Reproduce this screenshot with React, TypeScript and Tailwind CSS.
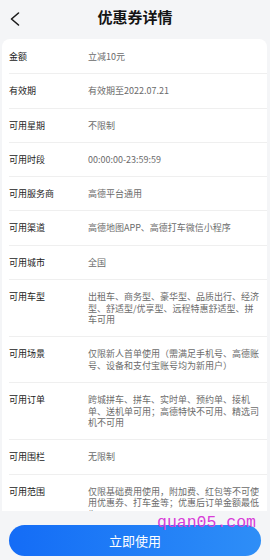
import React from "react";

const rows: [string, string][] = [
  ["金额", "立减10元"],
  ["有效期", "有效期至2022.07.21"],
  ["可用星期", "不限制"],
  ["可用时段", "00:00:00-23:59:59"],
  ["可用服务商", "高德平台通用"],
  ["可用渠道", "高德地图APP、高德打车微信小程序"],
  ["可用城市", "全国"],
  ["可用车型", "出租车、商务型、豪华型、品质出行、经济型、舒适型/优享型、远程特惠舒适型、拼车可用"],
  ["可用场景", "仅限新人首单使用（需满足手机号、高德账号、设备和支付宝账号均为新用户）"],
  ["可用订单", "跨城拼车、拼车、实时单、预约单、接机单、送机单可用；高德特快不可用、精选司机不可用"],
  ["可用围栏", "无限制"],
  ["可用范围", "仅限基础费用使用，附加费、红包等不可使用优惠券、打车金等；优惠后订单金额最低为0.01元"],
];

export default function App() {
  return (
    <div
      className="relative flex h-[560px] w-[270px] flex-col overflow-hidden bg-[#f4f5f7]"
      style={{ fontFamily: '"Noto Sans CJK SC", "Noto Sans", sans-serif' }}
    >
      <div className="relative flex h-[33px] shrink-0 items-center justify-center">
        <svg
          className="absolute left-[9px] top-[11px]"
          width="12"
          height="16"
          viewBox="0 0 12 16"
          fill="none"
        >
          <polyline
            points="9.5,2 2.5,8 9.5,14"
            stroke="#1a1a1a"
            strokeWidth="1.6"
            strokeLinecap="round"
            strokeLinejoin="round"
          />
        </svg>
        <span className="text-[15px] font-bold leading-[20px] text-[#141414]">优惠券详情</span>
      </div>
      <div className="ml-[2px] mr-[3px] mt-[6px] h-[472px] shrink-0 overflow-hidden rounded-t-[8px] bg-white pt-[1px]">
        {rows.map(([k, v], i) => (
          <div
            key={i}
            className="ml-[7px] flex border-b border-[#efefef] pb-[10.8px] pt-[11px] text-[9px] leading-[11.5px]"
          >
            <div className="w-[79px] shrink-0 text-[#222222]">{k}</div>
            <div className="w-[172px] text-[#6b6b6b]">{v}</div>
          </div>
        ))}
      </div>
      <div className="flex flex-1 items-start px-[9px] pt-[14px]">
        <button className="flex h-[31px] w-full items-center justify-center rounded-full bg-gradient-to-r from-[#146cf6] to-[#2e8ef7] text-[13px] leading-none text-white">
          立即使用
        </button>
      </div>
      <div
        className="absolute left-[157px] top-[513px] text-[16.5px] leading-[20px] text-[#d83cd8]"
        style={{ fontFamily: '"Liberation Mono", monospace' }}
      >
        quan05.com
      </div>
    </div>
  );
}
